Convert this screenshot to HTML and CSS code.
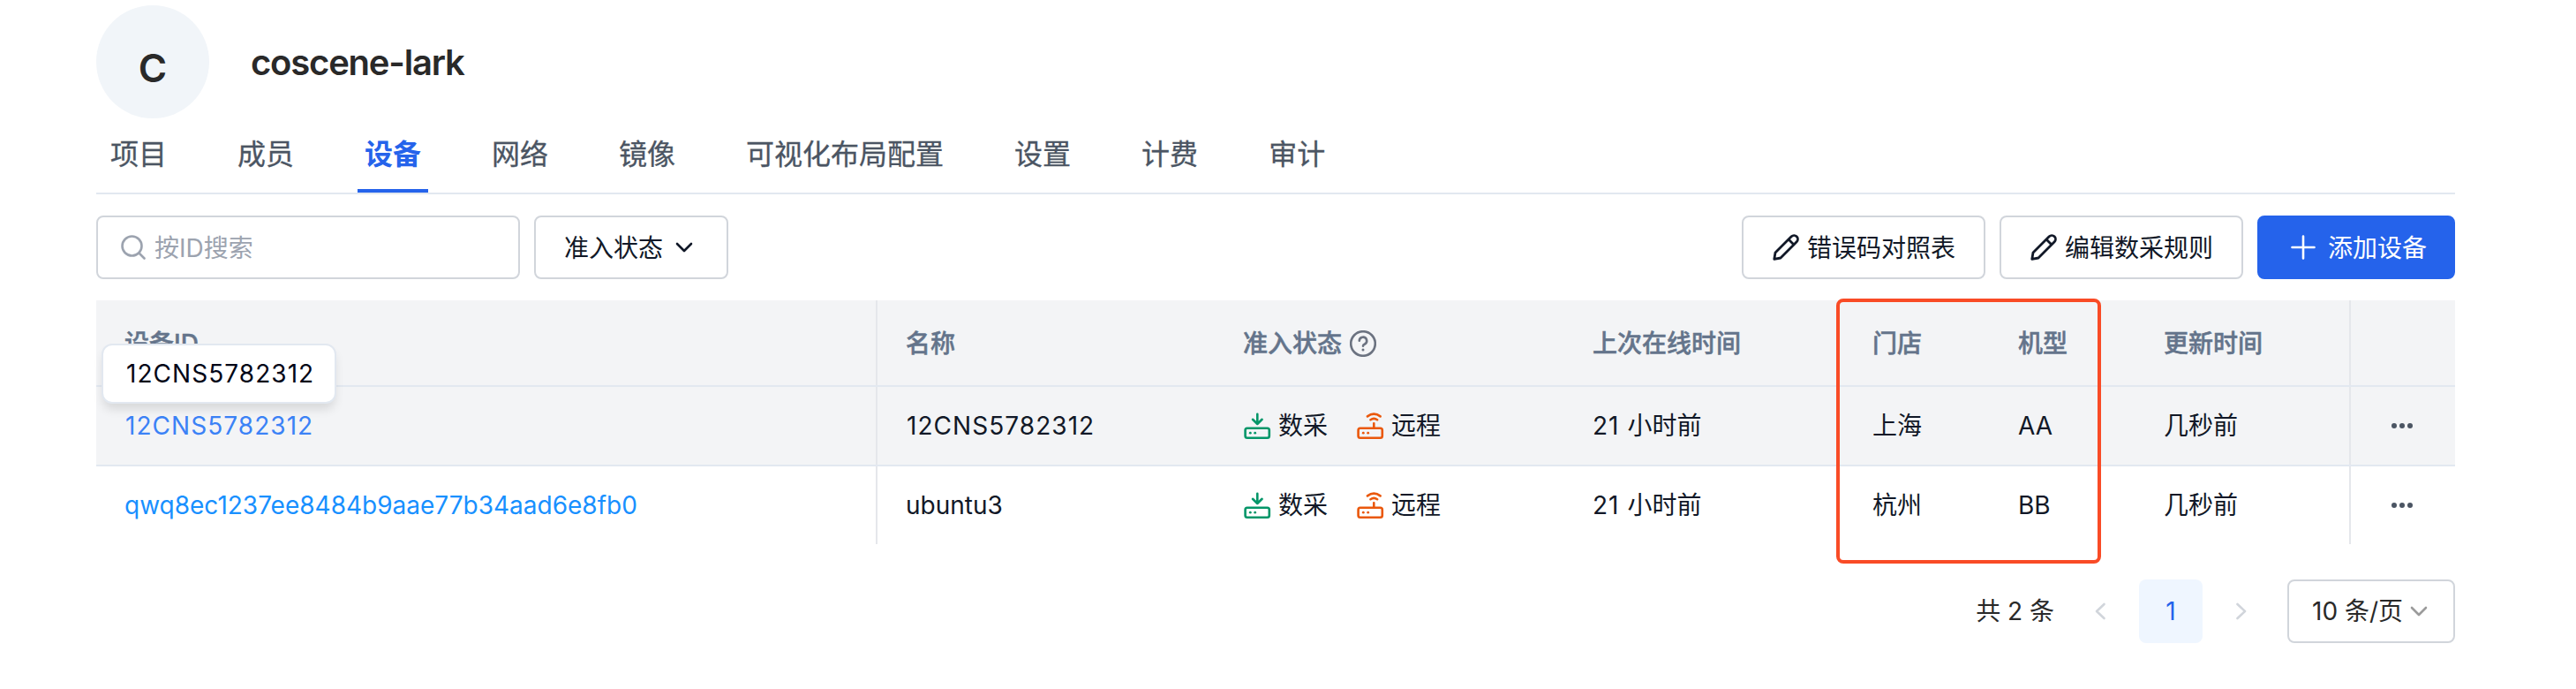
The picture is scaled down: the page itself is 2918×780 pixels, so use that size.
FILE: index.html
```html
<!DOCTYPE html>
<html lang="zh-CN">
<head>
<meta charset="utf-8">
<title>coscene-lark</title>
<link rel="stylesheet" href="styles.css">
</head>
<body>
<svg class="sprite" aria-hidden="true">
  <symbol id="collect" viewBox="0 0 32 32"><g fill="none" stroke="currentColor" stroke-width="2.6" stroke-linecap="round" stroke-linejoin="round"><rect x="2.6" y="18.700" width="27.2" height="11" rx="2.200"/><path d="M16.300 2.700V13.500M11 8.800L16.300 14l5.300-5.200"/></g><circle cx="8.300" cy="24.200" r="1.400" fill="currentColor" stroke="none"/><circle cx="13.700" cy="24.200" r="1.400" fill="currentColor" stroke="none"/></symbol>
  <symbol id="remote" viewBox="0 0 32 32"><g fill="none" stroke="currentColor" stroke-width="2.6" stroke-linecap="round" stroke-linejoin="round"><rect x="2.600" y="18.700" width="27.200" height="11" rx="2.200"/><path d="M20.300 18.500V13.300M16.500 9.200q3.800-2.600 7.600 0M13 5.400q7.300-5.400 14.600 0"/></g><circle cx="8.300" cy="24.200" r="1.400" fill="currentColor" stroke="none"/><circle cx="13.700" cy="24.200" r="1.400" fill="currentColor" stroke="none"/></symbol>
  <symbol id="pencil" viewBox="0 0 32 32"><path d="M2.800 29.300L4 22 22.200 3.800a4.200 4.200 0 0 1 6 6L10 28ZM19 7l6 6" fill="none" stroke="currentColor" stroke-width="2.800" stroke-linejoin="round"/></symbol>
</svg>
<main class="page">
  <header class="org"><div class="avatar">C</div><h1 class="org-name">coscene-lark</h1></header>
  <nav class="tabs">
    <a class="tab">项目</a><a class="tab">成员</a><a class="tab active">设备</a><a class="tab">网络</a><a class="tab">镜像</a><a class="tab">可视化布局配置</a><a class="tab">设置</a><a class="tab">计费</a><a class="tab">审计</a>
  </nav>
  <section class="toolbar">
    <div class="box search"><svg class="i-search" viewBox="0 0 28 28"><circle cx="12.500" cy="12.500" r="11" /><path d="M20.500 20.500l6 6"/></svg><span>按ID搜索</span></div>
    <button class="box filter"><span>准入状态</span><svg class="i-down" viewBox="0 0 20 12"><path d="M2 2l8 8 8-8"/></svg></button>
    <div class="spacer"></div>
    <button class="box edit"><svg class="i-pencil"><use href="#pencil"/></svg><span>错误码对照表</span></button>
    <button class="box edit"><svg class="i-pencil"><use href="#pencil"/></svg><span>编辑数采规则</span></button>
    <button class="box add"><svg class="i-plus" viewBox="0 0 28 28"><path d="M14 1.500v25M1.500 14h25"/></svg><span>添加设备</span></button>
  </section>
  <section class="table">
    <div class="row head">
      <div class="cell line">设备ID</div><div class="cell">名称</div><div class="cell">准入状态<svg class="i-help" viewBox="0 0 30 30"><circle cx="15" cy="15" r="13.800"/><path d="M10.800 11.800a4.200 4.200 0 1 1 6.200 3.700q-2 1-2 2.300"/><circle class="dot" cx="15" cy="22" r="1.500"/></svg></div><div class="cell">上次在线时间</div><div class="cell">门店</div><div class="cell">机型</div><div class="cell line">更新时间</div><div class="cell"></div>
    </div>
    <div class="row hover">
      <div class="cell line"><a class="link soft device">12CNS5782312</a></div><div class="cell"><span class="device">12CNS5782312</span></div>
      <div class="cell"><svg class="i-state green"><use href="#collect"/></svg><span class="state">数采</span><svg class="i-state orange"><use href="#remote"/></svg><span class="state">远程</span></div>
      <div class="cell"><span class="count">21</span>小时前</div><div class="cell">上海</div><div class="cell">AA</div><div class="cell line">几秒前</div>
      <div class="cell more"><i></i><i></i><i></i></div>
    </div>
    <div class="row">
      <div class="cell line"><a class="link">qwq8ec1237ee8484b9aae77b34aad6e8fb0</a></div><div class="cell">ubuntu3</div>
      <div class="cell"><svg class="i-state green"><use href="#collect"/></svg><span class="state">数采</span><svg class="i-state orange"><use href="#remote"/></svg><span class="state">远程</span></div>
      <div class="cell"><span class="count">21</span>小时前</div><div class="cell">杭州</div><div class="cell">BB</div><div class="cell line">几秒前</div>
      <div class="cell more"><i></i><i></i><i></i></div>
    </div>
    <div class="tooltip">12CNS5782312</div>
    <div class="highlight"></div>
  </section>
  <footer class="pager">
    <span class="total">共 2 条</span>
    <svg class="i-page" viewBox="0 0 14 20"><path d="M11.500 2L3 10l8.500 8"/></svg>
    <span class="current">1</span>
    <svg class="i-page" viewBox="0 0 14 20"><path d="M2.500 2L11 10l-8.500 8"/></svg>
    <button class="box size"><span>10 条/页</span><svg class="i-down" viewBox="0 0 20 12"><path d="M2 2l8 8 8-8"/></svg></button>
  </footer>
</main>
</body>
</html>
```
FILE: styles.css
```css
* { box-sizing: border-box; }
body { margin: 0; background: #fff; color: #111827; font: 28px/40px Inter, "Noto Sans CJK SC", sans-serif; }
svg { display: block; flex: none; fill: none; stroke: currentColor; stroke-width: 2.6; stroke-linecap: round; stroke-linejoin: round; }
.sprite { position: absolute; width: 0; height: 0; }
.page { width: 2918px; height: 780px; padding: 6px 137px 0 109px; overflow: hidden; }
.org { display: flex; align-items: center; gap: 47px; height: 128px; color: #292929; }
.avatar { width: 128px; height: 128px; padding-top: 13px; border-radius: 50%; background: #f1f5f9; font-size: 44px; line-height: 116px; font-weight: 600; text-align: center; }
.org-name { margin: 0; padding-top: 2px; font-size: 40px; line-height: 56px; font-weight: 600; letter-spacing: -1.2px; }
.tabs { display: flex; gap: 64px; height: 86px; padding: 0 8px; border-bottom: 2px solid #e2e8f0; color: #4b5563; font-size: 32px; -webkit-text-stroke: 0.3px currentColor; }
.tab { height: 84px; padding: 0 8px; line-height: 82px; white-space: nowrap; }
.tab.active { border-bottom: 4px solid #2563eb; color: #2563eb; font-weight: 700; -webkit-text-stroke: 0; }
.toolbar { display: flex; gap: 16px; margin-top: 24px; }
.box { display: flex; align-items: center; height: 72px; padding: 0; border: 2px solid #d1d5db; border-radius: 8px; background: #fff; color: #111827; font: inherit; white-space: nowrap; }
.toolbar .box span { padding-top: 1px; }
.search { width: 480px; gap: 10px; padding-left: 26px; color: #9ca3af; }
.i-search { width: 28px; height: 28px; }
.filter { width: 220px; padding-left: 32px; gap: 14px; }
.i-down { width: 20px; height: 12px; }
.spacer { flex: 1; }
.edit { width: 276px; gap: 8px; padding-left: 32px; }
.i-pencil { width: 32px; height: 32px; }
.add { width: 224px; gap: 14px; padding-left: 36px; border-color: #2563eb; background: #2563eb; color: #fff; }
.i-plus { width: 28px; height: 28px; }
.table { position: relative; margin-top: 24px; }
.row { display: grid; grid-template-columns: 885px 382px 396px 317px 165px 165px 244px 118px; height: 88px; }
.head { height: 98px; border-bottom: 2px solid #e2e8f0; background: #f3f4f6; color: #64748b; font-weight: 500; -webkit-text-stroke: 0.5px currentColor; }
.head .cell { padding-top: 1px; }
.hover { height: 90px; border-bottom: 2px solid #e2e8f0; background: #f3f4f6; }
.cell { display: flex; align-items: center; padding-left: 32px; white-space: nowrap; }
.line { border-right: 2px solid #e5e7eb; }
.device { padding-left: 1px; letter-spacing: 1.05px; }
.count { margin-right: 9px; letter-spacing: 1px; }
.link { color: #1890ff; }
.link.soft { color: #3b82f6; }
.i-help { width: 30px; height: 30px; margin-left: 9px; color: #6b7280; }
.i-help .dot { fill: currentColor; stroke: none; }
.i-state { width: 32px; height: 32px; }
.state { margin: 0 32px 0 8px; }
.green { color: #059669; }
.orange { color: #ea580c; }
.more { justify-content: center; gap: 3px; padding: 0 2px 0 0; }
.more i { width: 6px; height: 6px; border-radius: 50%; background: #4b5563; }
.tooltip { position: absolute; left: 6px; top: 49px; width: 266px; height: 68px; padding-left: 26px; border: 2px solid #e2e8f0; border-radius: 12px; background: #fff; box-shadow: 0 8px 12px -2px rgba(0,0,0,.12); color: #020617; line-height: 65px; letter-spacing: 1.05px; }
.highlight { position: absolute; left: 1971px; top: -2px; width: 300px; height: 300px; border: 4px solid #f94b26; border-radius: 8px; }
.pager { display: flex; align-items: center; justify-content: flex-end; margin-top: 40px; color: #292929; }
.total { margin-right: 45px; }
.i-page { width: 14px; height: 20px; color: #d1d5db; }
.current { width: 72px; height: 72px; margin: 0 37px 0 37px; border-radius: 8px; background: #eff6ff; color: #2563eb; line-height: 72px; text-align: center; }
.size { width: 190px; margin-left: 45px; padding-left: 26px; gap: 8px; color: #292929; }
.size .i-down { color: #9b9b9b; }
```
